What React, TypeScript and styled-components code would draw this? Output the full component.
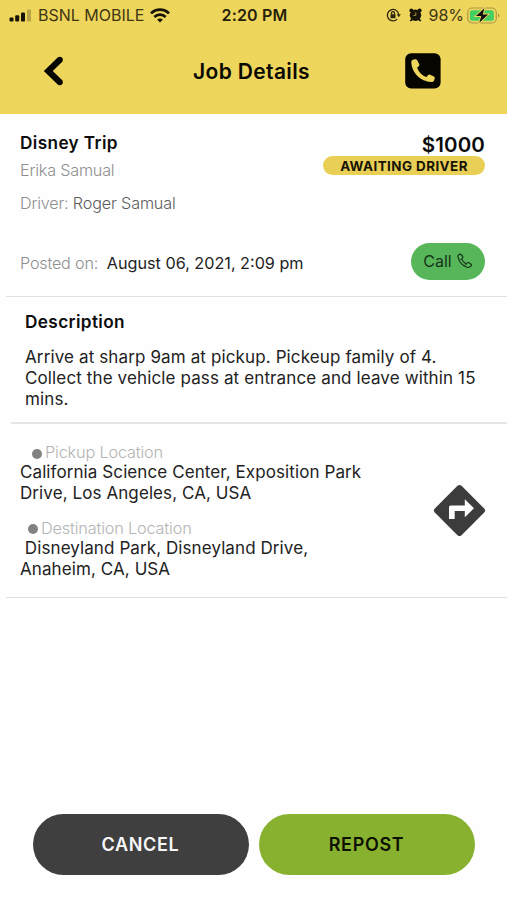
import React from "react";
import styled, { createGlobalStyle } from "styled-components";

const GlobalStyle = createGlobalStyle`
  *, *::before, *::after { box-sizing: border-box; }
  body { margin: 0; background: #fefefe; }
  p, h1, h2 { margin: 0; font-weight: 400; }
  svg { display: block; flex: none; }
  button { border: 0; padding: 0; background: none; font: inherit; color: inherit; }
`;

const Screen = styled.main`
  width: 507px;
  height: 900px;
  display: flex;
  flex-direction: column;
  overflow: hidden;
  background: #fefefe;
  font-family: Inter, "Liberation Sans", sans-serif;
  color: #1c1c1c;
`;

const Header = styled.header`
  height: 114px;
  flex: none;
  background: #eed55c;
  color: #0a0903;
`;

const StatusBar = styled.div`
  height: 30px;
  padding: 0 7px 0 9px;
  display: grid;
  grid-template-columns: 1fr auto 1fr;
  align-items: center;
  font-size: 16px;
  line-height: 20px;
`;

const StatusGroup = styled.div<{ $end?: boolean }>`
  display: flex;
  align-items: center;
  justify-content: ${(p) => (p.$end ? "flex-end" : "flex-start")};
  color: #3e3613;
`;

const StatusText = styled.span<{ $margin: string }>`
  margin: ${(p) => p.$margin};
  white-space: nowrap;
`;

const Clock = styled.span`
  font-weight: 600;
  font-size: 16px;
  letter-spacing: 0.15px;
  color: #262109;
`;

const NavBar = styled.div`
  height: 82px;
  padding: 0 66px 0 43px;
  display: grid;
  grid-template-columns: 36px 1fr 36px;
  align-items: center;
`;

const Title = styled.h1`
  text-align: center;
  font-size: 21px;
  line-height: 26px;
  font-weight: 600;
  letter-spacing: 0.35px;
  padding: 1px 0 0 19px;
`;

const Summary = styled.section`
  height: 183px;
  margin-left: 6px;
  padding: 18px 22px 0 14px;
  display: flex;
  justify-content: space-between;
  border-bottom: 1.5px solid #e0e0e0;
`;

const Column = styled.div<{ $end?: boolean }>`
  display: flex;
  flex-direction: column;
  align-items: ${(p) => (p.$end ? "flex-end" : "flex-start")};
`;

const Heading = styled.h2`
  font-size: 17.2px;
  line-height: 22px;
  font-weight: 600;
  letter-spacing: 0.38px;
  color: #0c0c0c;
`;

const Meta = styled.p<{ $top: number }>`
  margin-top: ${(p) => p.$top}px;
  font-size: 16.2px;
  line-height: 21px;
  font-weight: 300;
  letter-spacing: -0.2px;
  color: #8f8f8f;
  white-space: pre;
`;

const MetaValue = styled.span<{ $strong?: boolean }>`
  font-weight: ${(p) => (p.$strong ? 400 : 300)};
  letter-spacing: ${(p) => (p.$strong ? "0" : "-0.15px")};
  color: ${(p) => (p.$strong ? "#222" : "#5c5c5c")};
`;

const Price = styled.p`
  height: 24px;
  font-size: 20.5px;
  line-height: 25px;
  font-weight: 600;
  letter-spacing: 0.15px;
  color: #0a0a0a;
`;

const Status = styled.p`
  width: 162px;
  height: 19px;
  border-radius: 10px;
  background: #e9cf55;
  color: #171407;
  text-align: center;
  font-size: 13.4px;
  line-height: 20px;
  font-weight: 700;
  letter-spacing: 0.45px;
`;

const CallButton = styled.button`
  margin-top: 68px;
  width: 74px;
  height: 37px;
  padding-bottom: 1px;
  border-radius: 19px;
  background: #58b65a;
  color: #15351a;
  display: flex;
  align-items: center;
  justify-content: center;
  gap: 5px;
  font-size: 16px;
  line-height: 20px;
`;

const Description = styled.section`
  height: 127px;
  margin-left: 11px;
  padding: 14px 20px 0 14px;
  border-bottom: 2px solid #e5e5e5;
`;

const Body = styled.p<{ $top?: number; $spacing: number }>`
  margin-top: ${(p) => p.$top ?? 0}px;
  font-size: 17px;
  line-height: 21px;
  letter-spacing: ${(p) => p.$spacing}px;
  color: #222;
  white-space: pre;
`;

const Route = styled.section`
  height: 174px;
  margin-left: 6px;
  padding: 18px 21px 0 14px;
  display: flex;
  justify-content: space-between;
  border-bottom: 1.5px solid #e0e0e0;
`;

const Stop = styled.div`
  height: 75.5px;
`;

const StopLabel = styled.p<{ $indent: number }>`
  padding-left: ${(p) => p.$indent}px;
  display: flex;
  align-items: center;
  gap: 3px;
  font-size: 16.3px;
  line-height: 20px;
  font-weight: 300;
  letter-spacing: -0.18px;
  color: #b4b4b4;

  &::before {
    content: "";
    width: 10px;
    height: 10px;
    margin-top: 3px;
    border-radius: 50%;
    background: #828282;
  }
`;

const DirectionsButton = styled.button`
  width: 53px;
  height: 53px;
  margin-top: 42px;
`;

const Actions = styled.footer`
  margin-top: auto;
  padding: 0 32px 25px 33px;
  display: flex;
  gap: 10px;
`;

const Action = styled.button<{ $primary?: boolean }>`
  flex: 1;
  height: 61px;
  padding-right: 1px;
  border-radius: 31px;
  background: ${(p) => (p.$primary ? "#88b12f" : "#3f3f3f")};
  color: ${(p) => (p.$primary ? "#0d1104" : "#f8f8f8")};
  font-size: 18px;
  line-height: 22px;
  font-weight: 600;
  letter-spacing: 0.65px;
`;

const Signal = () => (
  <svg width="23" height="13" viewBox="0 0 23 13" fill="#171407">
    <rect x="0.5" y="8.5" width="4" height="4" rx="1" />
    <rect x="6.2" y="6.3" width="4" height="6.2" rx="1" />
    <rect x="12" y="3.6" width="4" height="8.9" rx="1" />
    <rect x="18" y="0.5" width="4" height="12" rx="1" opacity="0.25" />
  </svg>
);

const Wifi = () => (
  <svg width="20" height="15" viewBox="0 0 20 15" fill="none" stroke="#171407" strokeWidth="2.7">
    <path d="M1 5.4C6.1.4 13.9.4 19 5.4" />
    <path d="M4.3 8.9c3.3-3.1 8.1-3.1 11.4 0" />
    <path d="M10 14.6 7.1 11.6c1.7-1.5 4.1-1.5 5.8 0z" fill="#171407" stroke="none" />
  </svg>
);

const RotationLock = () => (
  <svg width="15" height="14" viewBox="0 0 15 14" fill="none" stroke="#2d270c" strokeWidth="1.3">
    <path d="M11.2 11.1A5.7 5.7 0 1 1 12.7 6.4" />
    <path d="M10.7 6.2h4.1l-2 3z" fill="#2d270c" stroke="none" />
    <rect x="4.5" y="6.2" width="5" height="4" rx=".5" fill="#2d270c" stroke="none" />
    <path d="M5.5 6.5V5.1a1.5 1.5 0 0 1 3 0v1.4" />
  </svg>
);

const Alarm = () => (
  <svg width="13" height="14" viewBox="0 0 13 14">
    <g fill="#171407">
      <circle cx="6.5" cy="7.2" r="5.7" />
      <circle cx="2.4" cy="2.6" r="2" />
      <circle cx="10.6" cy="2.6" r="2" />
      <path d="m2.3 10.2-1.5 2.5 1 .9 2.5-1.8zM10.7 10.2l1.5 2.5-1 .9-2.5-1.8z" />
    </g>
    <path d="M6.8 4.4v3H4.4" fill="none" stroke="#b8a446" strokeWidth="0.9" />
  </svg>
);

const Battery = () => (
  <svg width="33" height="17" viewBox="0 0 33 17">
    <rect x="0.7" y="1" width="28.6" height="15" rx="4.5" fill="none" stroke="#a99846" strokeWidth="1.1" />
    <path d="M31 6.5q3 2 0 4z" fill="#a99846" />
    <rect x="2.9" y="3.2" width="24" height="10.6" rx="2.6" fill="#42cf62" />
    <path d="M17.4 1.2 8.9 9.1h5.4l-2 6.7 8.8-8.4h-5.4z" fill="#111" stroke="#eed55c" strokeWidth="1.8" paintOrder="stroke" />
  </svg>
);

const Back = () => (
  <svg width="21" height="30" viewBox="0 0 21 30" fill="none" stroke="#060500" strokeWidth="6.2">
    <path d="M17.6 3.1 5.3 15l12.3 11.9" />
    <path d="M17.3 3.4 5.3 15l12 11.6" strokeWidth="5" strokeLinecap="round" />
  </svg>
);

const PhoneSquare = () => (
  <svg width="36" height="36" viewBox="0 0 36 36">
    <rect x="0.2" y="0.2" width="35.4" height="35.4" rx="6" fill="#060500" />
    <path
      d="M8 6.8 9.9 6.2q1.6-.3 2.3 1.1l2 3.7q.6 1.3-.4 2.3l-1.7 1.5q1.2 3.2 3.6 5.6 2.5 2.5 5.8 3.6l1.4-1.7q.9-1.1 2.2-.6l3.8 1.9q1.2.7.8 2l-.6 2q-.5 1.3-1.8 1.3C15.8 29.4 6.3 19.5 6.3 8.6q.1-1.4 1.7-1.8z"
      fill="#eed55c"
    />
  </svg>
);

const Handset = () => (
  <svg width="16" height="16" viewBox="0 0 16 16" fill="none" stroke="#15351a" strokeWidth="1.15" strokeLinejoin="round">
    <path d="M1.4 2.2Q2.6.8 3.7 1.2 5.3 2.4 5.9 4q.2.8-.6 1.4-.9.5-.5 1.2 1.3 2.4 3.9 4.1.7.4 1.1-.4.6-.9 1.4-.8 1.8.5 3 1.9.6.9-.3 1.8-1.7 1.8-3.8 1.1C5.7 12.8 2.3 8.9 1.1 4.6q-.4-1.4.3-2.4z" />
    <path d="M5.1 5.5 2.4 7M9.4 10.9l-2 2.3" strokeWidth="0.7" />
  </svg>
);

const Directions = () => (
  <svg width="53" height="53" viewBox="0 0 53 53">
    <path
      d="M24.5 1.8q2-1.8 4 0l22.7 22.7q1.8 2 0 4L28.5 51.2q-2 1.8-4 0L1.8 28.5q-1.8-2 0-4z"
      fill="#3c3c3c"
    />
    <path d="M16 35V23q0-1.6 1.6-1.6h14.2v-6.2l9.2 9-9.2 9v-6.1H21.7V35z" fill="#fefefe" />
  </svg>
);

export default function App() {
  return (
    <Screen>
      <GlobalStyle />
      <Header>
        <StatusBar>
          <StatusGroup>
            <Signal />
            <StatusText $margin="0 6px 0 6px">BSNL MOBILE</StatusText>
            <Wifi />
          </StatusGroup>
          <Clock>2:20 PM</Clock>
          <StatusGroup $end>
            <RotationLock />
            <StatusText $margin="0 0 0 8px"><Alarm /></StatusText>
            <StatusText $margin="0 3px 0 6px">98%</StatusText>
            <Battery />
          </StatusGroup>
        </StatusBar>
        <NavBar>
          <button aria-label="Back"><Back /></button>
          <Title>Job Details</Title>
          <button aria-label="Phone"><PhoneSquare /></button>
        </NavBar>
      </Header>

      <Summary>
        <Column>
          <Heading>Disney Trip</Heading>
          <Meta $top={6}>Erika Samual</Meta>
          <Meta $top={12}>Driver: <MetaValue>Roger Samual</MetaValue></Meta>
          <Meta $top={39}>Posted on:  <MetaValue $strong>August 06, 2021, 2:09 pm</MetaValue></Meta>
        </Column>
        <Column $end>
          <Price>$1000</Price>
          <Status>AWAITING DRIVER</Status>
          <CallButton>Call <Handset /></CallButton>
        </Column>
      </Summary>

      <Description>
        <Heading>Description</Heading>
        <Body $top={14} $spacing={0.125}>{"Arrive at sharp 9am at pickup. Pickeup family of 4.\nCollect the vehicle pass at entrance and leave within 15\nmins."}</Body>
      </Description>

      <Route>
        <div>
          <Stop>
            <StopLabel $indent={12}>Pickup Location</StopLabel>
            <Body $spacing={0.09}>{"California Science Center, Exposition Park\nDrive, Los Angeles, CA, USA"}</Body>
          </Stop>
          <Stop>
            <StopLabel $indent={8}>Destination Location</StopLabel>
            <Body $spacing={0.09}>{" Disneyland Park, Disneyland Drive,\nAnaheim, CA, USA"}</Body>
          </Stop>
        </div>
        <DirectionsButton aria-label="Directions"><Directions /></DirectionsButton>
      </Route>

      <Actions>
        <Action>CANCEL</Action>
        <Action $primary>REPOST</Action>
      </Actions>
    </Screen>
  );
}
